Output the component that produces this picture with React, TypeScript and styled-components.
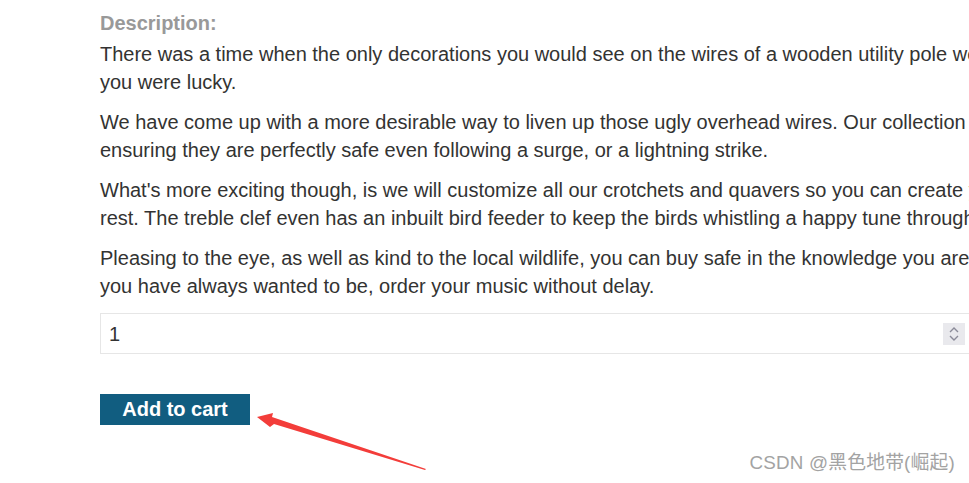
import { createGlobalStyle, styled } from "styled-components";

const GlobalStyle = createGlobalStyle`
  html, body {
    margin: 0;
    padding: 0;
    background: #fff;
    overflow: hidden;
  }
  body {
    font-family: "Liberation Sans", Arial, sans-serif;
  }
`;

const Page = styled.div`
  width: 969px;
  height: 483px;
  position: relative;
  overflow: hidden;
  background: #fff;
`;

const Content = styled.section`
  padding: 9px 0 0 100px;
  width: 1500px;
  color: #333332;
  font-size: 20px;
  line-height: 28px;
`;

const Label = styled.label`
  display: block;
  color: #999;
  font-weight: bold;
  margin-bottom: 3px;
`;

const Paragraph = styled.p`
  margin: 0 0 12px;
  white-space: nowrap;
`;

const QuantityBox = styled.div`
  display: flex;
  align-items: center;
  width: 870px;
  height: 41px;
  margin-top: 13px;
  border: 1px solid #e6e6e6;
  box-sizing: border-box;
  padding: 0 4px 0 8px;
`;

const QuantityInput = styled.input`
  flex: 1;
  border: 0;
  outline: none;
  font: inherit;
  font-size: 20px;
  color: #333332;
  padding: 0;
  background: transparent;
  -moz-appearance: textfield;
  &::-webkit-inner-spin-button,
  &::-webkit-outer-spin-button {
    -webkit-appearance: none;
    margin: 0;
  }
`;

const Spinner = styled.div`
  width: 22px;
  height: 22px;
  background: #e9e9ed;
  display: flex;
  align-items: center;
  justify-content: center;
`;

const Button = styled.button`
  display: block;
  margin-top: 40px;
  width: 150px;
  height: 31px;
  border: 0;
  border-radius: 0;
  background: #115d80;
  color: #fff;
  font-family: "Liberation Sans", Arial, sans-serif;
  font-weight: bold;
  font-size: 20px;
  padding: 0;
  cursor: pointer;
`;

const Arrow = styled.svg`
  position: absolute;
  left: 250px;
  top: 400px;
  overflow: visible;
`;

const Watermark = styled.div`
  position: absolute;
  right: 14px;
  bottom: 9px;
  font-family: "Liberation Sans", "Noto Sans CJK SC", sans-serif;
  font-size: 18.8px;
  color: #a3a3a3;
  letter-spacing: 0.2px;
`;

const paragraphs: [string, string][] = [
  [
    "There was a time when the only decorations you would see on the wires of a wooden utility pole were socks and baseball boots; the odd colorful kite as well if",
    "you were lucky.",
  ],
  [
    "We have come up with a more desirable way to liven up those ugly overhead wires. Our collection of musical notes are weatherproof and electrically tested,",
    "ensuring they are perfectly safe even following a surge, or a lightning strike.",
  ],
  [
    "What's more exciting though, is we will customize all our crotchets and quavers so you can create your own musical masterpiece, complete with minims and a",
    "rest. The treble clef even has an inbuilt bird feeder to keep the birds whistling a happy tune throughout the winter months.",
  ],
  [
    "Pleasing to the eye, as well as kind to the local wildlife, you can buy safe in the knowledge you are not only the envy of the street, but the music lover",
    "you have always wanted to be, order your music without delay.",
  ],
];

export default function App() {
  return (
    <Page>
      <GlobalStyle />
      <Content>
        <Label>Description:</Label>
        {paragraphs.map(([first, second]) => (
          <Paragraph key={first}>
            {first}
            <br />
            {second}
          </Paragraph>
        ))}
        <QuantityBox>
          <QuantityInput type="number" defaultValue={1} min={0} max={99} />
          <Spinner>
            <svg width="12" height="18" viewBox="0 0 12 18">
              <path
                d="M2 7 L6 3 L10 7 M2 11 L6 15 L10 11"
                fill="none"
                stroke="#8b8b99"
                strokeWidth="1.4"
              />
            </svg>
          </Spinner>
        </QuantityBox>
        <Button>Add to cart</Button>
      </Content>
      <Arrow width="190" height="80" viewBox="0 0 190 80">
        <path
          d="M7 17 L23 13 L22 17 L176 69 L175 70 L24 24 L20 27 Z"
          fill="#f33d3a"
        />
      </Arrow>
      <Watermark>CSDN @黑色地带(崛起)</Watermark>
    </Page>
  );
}
